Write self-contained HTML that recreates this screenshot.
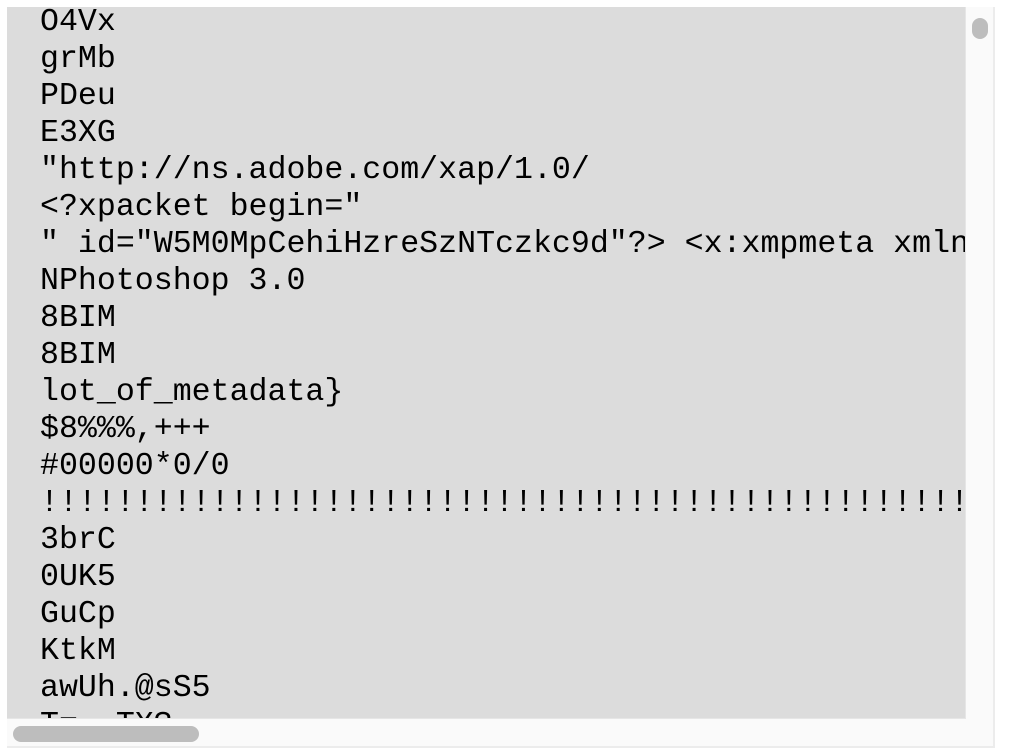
<!DOCTYPE html>
<html><head><style>
html,body{margin:0;padding:0;background:#fff;width:1010px;height:750px;overflow:hidden}
.frame{position:absolute;left:7px;top:7px;width:986px;height:739px;background:#fafafa;border-right:2px solid #ececec;border-bottom:2px solid #ececec}
.grey{position:absolute;left:0;top:0;width:958px;height:711px;background:#dcdcdc;overflow:hidden;border-right:1px solid #e6e6e6;border-bottom:1px solid #e6e6e6}
pre{position:absolute;left:33px;top:-3px;margin:0;font-family:"Courier New","Nimbus Mono PS","Liberation Mono",monospace;font-size:31.6px;line-height:37px;color:#000;white-space:pre}
.vthumb{position:absolute;left:965px;top:11px;width:16px;height:21px;border-radius:8px;background:#bdbdbd}
.hthumb{position:absolute;left:6px;top:719px;width:186px;height:16px;border-radius:8px;background:#bdbdbd}
</style></head><body>
<div class="frame">
<div class="grey"><pre>O4Vx
grMb
PDeu
E3XG
"http://ns.adobe.com/xap/1.0/
&lt;?xpacket begin="
" id="W5M0MpCehiHzreSzNTczkc9d"?&gt; &lt;x:xmpmeta xmlns:x="adobe:ns:meta/"&gt;
NPhotoshop 3.0
8BIM
8BIM
lot_of_metadata}
$8%%%,+++
#00000*0/0
!!!!!!!!!!!!!!!!!!!!!!!!!!!!!!!!!!!!!!!!!!!!!!!!!!!!
3brC
0UK5
GuCp
KtkM
awUh.@sS5
T=..TX?</pre></div>
<div class="vthumb"></div>
<div class="hthumb"></div>
</div>
</body></html>
